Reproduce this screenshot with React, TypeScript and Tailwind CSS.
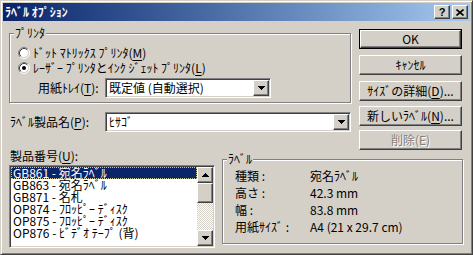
import type { ReactNode } from 'react';

// Win2000-style 3D edges
const raised =
    'border border-t-white border-l-white border-r-[#404040] border-b-[#404040] shadow-[inset_-1px_-1px_0_#808080]';
const sunken =
    'border border-t-[#808080] border-l-[#808080] border-r-white border-b-white shadow-[inset_1px_1px_0_#404040,inset_-1px_-1px_0_#d4d0c8]';
const etched = 'border border-[#808080] shadow-[inset_1px_1px_0_#fff,1px_1px_0_#fff]';

const Arrow = ({ up }: { up?: boolean }) => (
    <svg width="7" height="4" viewBox="0 0 7 4" shapeRendering="crispEdges" className={up ? 'rotate-180' : ''}>
        <rect x="0" y="0" width="7" height="1" />
        <rect x="1" y="1" width="5" height="1" />
        <rect x="2" y="2" width="3" height="1" />
        <rect x="3" y="3" width="1" height="1" />
    </svg>
);

const Radio = ({ checked }: { checked?: boolean }) => (
    <svg width="12" height="12" viewBox="0 0 12 12" className="shrink-0">
        <circle cx="6" cy="6" r="4.5" fill="#fff" />
        <path d="M2.11 9.89 A5.5 5.5 0 0 1 9.89 2.11" fill="none" stroke="#808080" />
        <path d="M9.89 2.11 A5.5 5.5 0 0 1 2.11 9.89" fill="none" stroke="#fff" />
        <path d="M2.82 9.18 A4.5 4.5 0 0 1 9.18 2.82" fill="none" stroke="#404040" />
        <path d="M9.18 2.82 A4.5 4.5 0 0 1 2.82 9.18" fill="none" stroke="#d4d0c8" />
        {checked && <circle cx="6" cy="6" r="2" fill="#000" />}
    </svg>
);

const Combo = ({ value, className = '' }: { value: string; className?: string }) => (
    <div className={`${sunken} h-[20px] bg-white flex items-stretch p-[1px] ${className}`}>
        <span className="flex-1 pl-[2px] flex items-center leading-[14px] whitespace-nowrap">{value}</span>
        <div className={`${raised} w-[16px] bg-[#d4d0c8] flex items-center justify-center`}>
            <Arrow />
        </div>
    </div>
);

const Group = ({ label, className = '', children }: { label: string; className?: string; children: ReactNode }) => (
    <div className={`relative ${etched} ${className}`}>
        <span className="absolute -top-[7px] left-[4px] px-[1px] bg-[#d4d0c8] leading-[12px]">{label}</span>
        {children}
    </div>
);

const Btn = ({
    children,
    def,
    disabled,
    className = '',
}: {
    children: ReactNode;
    def?: boolean;
    disabled?: boolean;
    className?: string;
}) => {
    const inner = (
        <div
            className={`${raised} h-full flex items-center justify-center leading-[14px] whitespace-nowrap ${
                disabled ? 'text-[#808080] [text-shadow:1px_1px_0_#fff]' : ''
            }`}
        >
            {children}
        </div>
    );
    return def ? (
        <div className={`h-[20px] border border-black ${className}`}>{inner}</div>
    ) : (
        <div className={`h-[20px] ${className}`}>{inner}</div>
    );
};

const U = ({ children }: { children: ReactNode }) => <span className="underline underline-offset-[2px]">{children}</span>;

const items = [
    'GB861 - 宛名ﾗﾍﾞﾙ',
    'GB863 - 宛名ﾗﾍﾞﾙ',
    'GB871 - 名札',
    'OP874 - ﾌﾛｯﾋﾟｰ ﾃﾞｨｽｸ',
    'OP875 - ﾌﾛｯﾋﾟｰ ﾃﾞｨｽｸ',
    'OP876 - ﾋﾞﾃﾞｵ ﾃｰﾌﾟ (背)',
];

const details = [
    ['種類 :', '宛名ﾗﾍﾞﾙ'],
    ['高さ :', '42.3 mm'],
    ['幅 :', '83.8 mm'],
    ['用紙ｻｲｽﾞ :', 'A4 (21 x 29.7 cm)'],
];

export default function App() {
    return (
        <div className="w-[473px] h-[255px] bg-[#d4d0c8] p-[2px] border border-t-[#d4d0c8] border-l-[#d4d0c8] border-r-[#404040] border-b-[#404040] shadow-[inset_1px_1px_0_#fff,inset_-1px_-1px_0_#808080] font-['Noto_Sans_CJK_JP',sans-serif] text-[12px] leading-[14px] text-black overflow-hidden">
            {/* Title bar */}
            <div className="h-[18px] flex items-center bg-linear-to-r from-[#0a246a] to-[#a6caf0] pl-[2px] pr-[2px]">
                <span className="flex-1 text-white font-bold leading-[14px] whitespace-nowrap">ﾗﾍﾞﾙ ｵﾌﾟｼｮﾝ</span>
                <div className={`${raised} w-[16px] h-[14px] bg-[#d4d0c8] flex items-center justify-center text-[11px] font-bold leading-none font-['Liberation_Sans',sans-serif]`}>
                    ?
                </div>
                <div className={`${raised} ml-[2px] w-[16px] h-[14px] bg-[#d4d0c8] flex items-center justify-center`}>
                    <svg width="8" height="7" viewBox="0 0 8 7">
                        <path d="M0.5 0.5 L7.5 6.5 M7.5 0.5 L0.5 6.5" stroke="#000" strokeWidth="1.6" />
                    </svg>
                </div>
            </div>

            {/* Top section */}
            <div className="flex pl-[6px]">
                <div className="w-[342px] mt-[12px] flex flex-col">
                    <Group label="ﾌﾟﾘﾝﾀ" className="h-[70px] pt-[12px]">
                        <div className="h-[14px] flex items-center pl-[8px]">
                            <Radio />
                            <span className="ml-[3px] whitespace-nowrap">
                                ﾄﾞｯﾄ ﾏﾄﾘｯｸｽ ﾌﾟﾘﾝﾀ(<U>M</U>)
                            </span>
                        </div>
                        <div className="h-[14px] mt-[1px] flex items-center pl-[8px]">
                            <Radio checked />
                            <span className="ml-[3px] whitespace-nowrap">
                                ﾚｰｻﾞｰ ﾌﾟﾘﾝﾀとｲﾝｸ ｼﾞｪｯﾄ ﾌﾟﾘﾝﾀ(<U>L</U>)
                            </span>
                        </div>
                        <div className="h-[20px] mt-[3px] flex items-center pl-[28px]">
                            <span className="w-[67px] whitespace-nowrap">
                                用紙ﾄﾚｲ(<U>T</U>):
                            </span>
                            <Combo value="既定値 (自動選択)" className="w-[166px]" />
                        </div>
                    </Group>
                    <div className="h-[20px] mt-[9px] flex items-center">
                        <span className="w-[96px] pl-[1px] whitespace-nowrap">
                            ﾗﾍﾞﾙ製品名(<U>P</U>):
                        </span>
                        <Combo value="ﾋｻｺﾞ" className="flex-1" />
                    </div>
                </div>

                <div className="ml-[8px] w-[103px] mt-[8px] flex flex-col">
                    <Btn def>OK</Btn>
                    <Btn className="mt-[6px]">ｷｬﾝｾﾙ</Btn>
                    <Btn className="mt-[6px]">
                        ｻｲｽﾞの詳細(<U>D</U>)...
                    </Btn>
                    <Btn className="mt-[5px]">
                        新しいﾗﾍﾞﾙ(<U>N</U>)...
                    </Btn>
                    <Btn className="mt-[4px]" disabled>
                        削除(E)
                    </Btn>
                </div>
            </div>

            {/* Bottom section */}
            <div className="flex pl-[6px]">
                <div className="w-[206px] flex flex-col">
                    <span className="h-[12px] leading-[12px] pl-[1px] whitespace-nowrap">
                        製品番号(<U>U</U>):
                    </span>
                    <div className={`${sunken} mt-[3px] h-[83px] p-[1px] bg-white flex`}>
                        <div className="flex-1 flex flex-col">
                            {items.map((it, i) => (
                                <div
                                    key={it}
                                    className={`h-[12px] leading-[12px] pl-[2px] whitespace-nowrap ${
                                        i === 0
                                            ? 'bg-[#0a246a] text-white outline-1 outline-dotted outline-[#c8c8a0] -outline-offset-1'
                                            : ''
                                    }`}
                                >
                                    {it}
                                </div>
                            ))}
                        </div>
                        <div className="w-[16px] flex flex-col">
                            <div className={`${raised} h-[16px] bg-[#d4d0c8] flex items-center justify-center`}>
                                <Arrow up />
                            </div>
                            <div className={`${raised} h-[20px] bg-[#d4d0c8]`} />
                            <div className="flex-1 bg-[repeating-conic-gradient(#fff_0_25%,#d4d0c8_0_50%)] bg-[length:2px_2px]" />
                            <div className={`${raised} h-[16px] bg-[#d4d0c8] flex items-center justify-center`}>
                                <Arrow />
                            </div>
                        </div>
                    </div>
                </div>

                <Group label="ﾗﾍﾞﾙ" className="ml-[7px] w-[241px] mt-[9px] h-[85px] pt-[7px] pl-[12px]">
                    {details.map(([k, v]) => (
                        <div key={k} className="h-[17px] flex items-center whitespace-nowrap">
                            <span className="w-[75px]">{k}</span>
                            <span>{v}</span>
                        </div>
                    ))}
                </Group>
            </div>
        </div>
    );
}
